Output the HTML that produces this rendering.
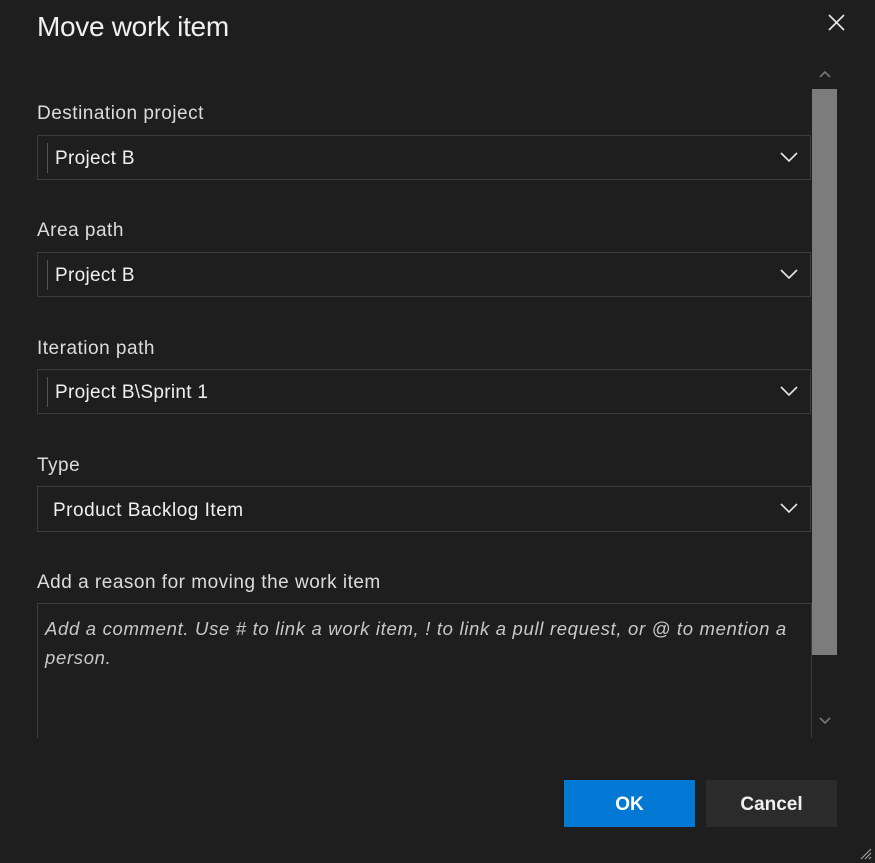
<!DOCTYPE html>
<html><head><meta charset="utf-8"><style>
html,body{margin:0;padding:0;width:875px;height:863px;overflow:hidden;background:#1e1e1e;font-family:"Liberation Sans",sans-serif;color:#e6e6e6}
.t{position:absolute;left:37px;top:11px;font-size:28px;color:#f0f0f0;font-weight:300;letter-spacing:-0.3px}
.lbl{position:absolute;left:37px;font-size:19px;color:#dcdcdc;letter-spacing:0.5px}
.in{position:absolute;left:37px;width:774px;height:45px;border:1px solid #3c3c3c;box-sizing:border-box;background:#1e1e1e}
.in .bar{position:absolute;left:9px;top:7px;width:1px;height:30px;background:#555}
.in span{position:absolute;left:17px;top:12px;font-size:19px;color:#f0f0f0;letter-spacing:0.3px}
.in svg{position:absolute;right:12px;top:15px}
.ta{position:absolute;left:37px;top:603px;width:775px;height:135px;border:1px solid #3c3c3c;border-bottom:none;box-sizing:border-box}
.ta div{position:absolute;left:7px;top:10px;right:14px;font-size:18.5px;font-style:italic;color:#c8c8c8;line-height:29px;white-space:nowrap;letter-spacing:0.68px}
.btn{position:absolute;top:780px;width:131px;height:47px;font-size:19px;font-weight:bold;text-align:center;line-height:50px}
</style></head><body>
<div class="t">Move work item</div>
<svg style="position:absolute;left:827px;top:13px" width="19" height="19"><path d="M2 2L17 17M17 2L2 17" stroke="#e6e6e6" stroke-width="1.6"/></svg>
<svg style="position:absolute;left:818px;top:70px" width="14" height="10"><path d="M2 7L7 2L12 7" stroke="#777" stroke-width="1.6" fill="none"/></svg>
<div style="position:absolute;left:812px;top:89px;width:25px;height:566px;background:#7c7c7c"></div>
<div style="position:absolute;left:811px;top:655px;width:1px;height:83px;background:#333"></div>
<svg style="position:absolute;left:818px;top:716px" width="14" height="10"><path d="M2 2L7 7L12 2" stroke="#777" stroke-width="1.6" fill="none"/></svg>

<div class="lbl" style="top:103px">Destination project</div>
<div class="in" style="top:135px"><div class="bar"></div><span>Project B</span><svg width="18" height="12"><path d="M1 2L9 10L17 2" stroke="#e6e6e6" stroke-width="1.6" fill="none"/></svg></div>
<div class="lbl" style="top:220px">Area path</div>
<div class="in" style="top:252px"><div class="bar"></div><span>Project B</span><svg width="18" height="12"><path d="M1 2L9 10L17 2" stroke="#e6e6e6" stroke-width="1.6" fill="none"/></svg></div>
<div class="lbl" style="top:338px">Iteration path</div>
<div class="in" style="top:369px"><div class="bar"></div><span>Project B\Sprint 1</span><svg width="18" height="12"><path d="M1 2L9 10L17 2" stroke="#e6e6e6" stroke-width="1.6" fill="none"/></svg></div>
<div class="lbl" style="top:455px">Type</div>
<div class="in" style="top:486px;height:46px"><span style="left:15px;top:13px;letter-spacing:0.5px">Product Backlog Item</span><svg width="18" height="12" style="top:15px"><path d="M1 2L9 10L17 2" stroke="#e6e6e6" stroke-width="1.6" fill="none"/></svg></div>
<div class="lbl" style="top:572px">Add a reason for moving the work item</div>
<div class="ta"><div>Add a comment. Use # to link a work item, ! to link a pull request, or @ to mention a<br>person.</div></div>

<div class="btn" style="left:564px;background:#0078d4;color:#fff">OK</div>
<div class="btn" style="left:706px;background:#2b2b2b;color:#f0f0f0">Cancel</div>
<svg style="position:absolute;left:857px;top:845px" width="16" height="16"><path d="M14 4L4 14M14 8L8 14M14 12L12 14" stroke="#aaa" stroke-width="1"/></svg>
</body></html>
